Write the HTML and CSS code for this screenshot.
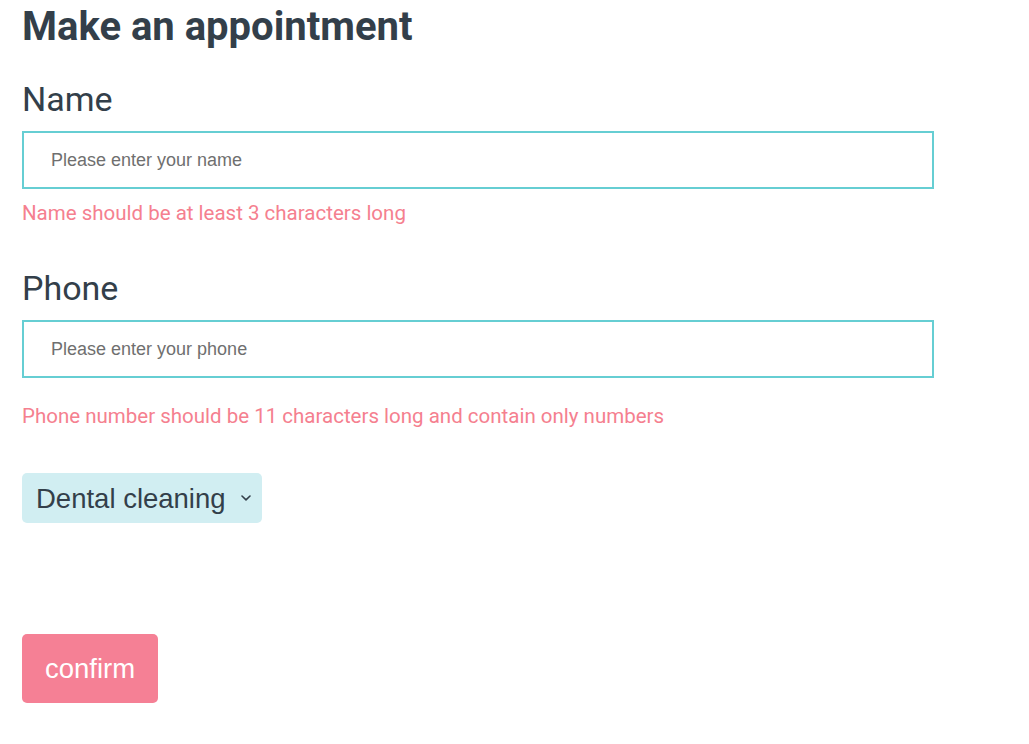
FILE: index.html
```html
<!DOCTYPE html>
<html lang="en">
<head>
<meta charset="utf-8">
<title>Make an appointment</title>
<link rel="stylesheet" href="styles.css">
</head>
<body>
<main class="page">
  <h1 class="title">Make an appointment</h1>
  <form class="form">
    <div class="field">
      <label class="label" for="name">Name</label>
      <input class="input" id="name" type="text" placeholder="Please enter your name">
      <p class="error">Name should be at least 3 characters long</p>
    </div>
    <div class="field field-phone">
      <label class="label" for="phone">Phone</label>
      <input class="input" id="phone" type="text" placeholder="Please enter your phone">
      <p class="error error-phone">Phone number should be 11 characters long and contain only numbers</p>
    </div>
    <div class="select-row">
      <select class="select">
        <option>Dental cleaning</option>
        <option>Tooth extraction</option>
        <option>Check-up</option>
      </select>
      <svg class="chevron" width="10" height="6" viewBox="0 0 10 6" aria-hidden="true">
        <path d="M1 1 L5 4.8 L9 1" fill="none" stroke="#333f4a" stroke-width="1.6" stroke-linecap="round" stroke-linejoin="round"/>
      </svg>
    </div>
    <div class="actions">
      <button class="confirm" type="button">confirm</button>
    </div>
  </form>
</main>
</body>
</html>
```

FILE: styles.css
```css
html, body {
  margin: 0;
  padding: 0;
  background: #ffffff;
}

.page {
  padding: 0 22px;
  font-family: Roboto, "Liberation Sans", sans-serif;
  color: #333f4a;
}

.title {
  margin: 0;
  padding-top: 3px;
  font-size: 40px;
  line-height: 48px;
  font-weight: 700;
}

.form {
  display: flex;
  flex-direction: column;
  align-items: flex-start;
}

.field {
  display: flex;
  flex-direction: column;
  width: 100%;
}

.label {
  margin-top: 28px;
  font-size: 34px;
  line-height: 40px;
  font-weight: 400;
}

.field-phone .label {
  margin-top: 43px;
}

.input {
  box-sizing: border-box;
  margin-top: 12px;
  width: 912px;
  height: 58px;
  border: 2px solid #66ced3;
  padding: 0 0 0 27px;
  font-family: "Liberation Sans", Arial, sans-serif;
  font-size: 18px;
  color: #333;
  outline: none;
}

.input::placeholder {
  color: #6f6f6f;
}

.error {
  margin: 12px 0 0;
  font-size: 20.5px;
  line-height: 24px;
  color: #f5808f;
}

.error-phone {
  margin-top: 26px;
}

.select-row {
  position: relative;
  margin-top: 45px;
}

.select {
  display: block;
  box-sizing: border-box;
  -webkit-appearance: none;
  appearance: none;
  height: 50px;
  width: 240px;
  padding: 0 34px 0 14px;
  border: none;
  border-radius: 5px;
  background-color: #d1eef2;
  font-family: "Liberation Sans", Arial, sans-serif;
  font-size: 27.5px;
  color: #333f4a;
  outline: none;
}

.chevron {
  position: absolute;
  right: 11px;
  top: 22px;
  pointer-events: none;
}

.actions {
  margin-top: 111px;
}

.confirm {
  height: 69px;
  padding: 0 23px;
  border: none;
  border-radius: 5px;
  background: #f58095;
  color: #ffffff;
  font-family: "Liberation Sans", Arial, sans-serif;
  font-size: 27.5px;
  cursor: pointer;
}
```
